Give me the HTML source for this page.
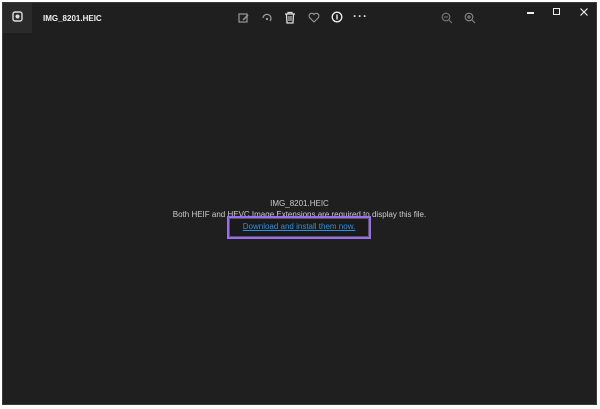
<!DOCTYPE html>
<html><head><style>
html,body{margin:0;padding:0;background:#fff;width:600px;height:409px;overflow:hidden;font-family:"Liberation Sans",sans-serif}
#win{position:absolute;left:2px;top:2px;width:595px;height:403px;background:#1f1f1f;border:1px solid #3a3a3a;box-sizing:border-box}
.ic{position:absolute;color:#bbb;font-size:11px}
svg{position:absolute}
</style></head><body>
<div id="win">
 <div style="position:absolute;left:0;top:0;width:29px;height:30px;background:#2a2a2a"></div>
 <svg style="left:9px;top:8px" width="11" height="11" viewBox="0 0 11 11"><rect x="1" y="1" width="9" height="9" rx="2" fill="none" stroke="#ddd" stroke-width="1.4"/><circle cx="5.5" cy="5.5" r="2" fill="#ddd"/></svg>
 <div style="position:absolute;left:40px;top:11px;color:#eee;font-size:8px;font-weight:bold">IMG_8201.HEIC</div>
 <svg style="left:235px;top:9px" width="12" height="12" viewBox="0 0 12 12"><rect x="1" y="2" width="8" height="8" fill="none" stroke="#999" stroke-width="1.2"/><path d="M5 8 L10 3" stroke="#999" stroke-width="1.5"/></svg>
 <svg style="left:258px;top:9px" width="12" height="12" viewBox="0 0 12 12"><path d="M2 6 A4 4 0 1 1 9 9" fill="none" stroke="#999" stroke-width="1.2"/><circle cx="6" cy="7" r="1.2" fill="#999"/></svg>
 <svg style="left:281px;top:8px" width="12" height="13" viewBox="0 0 12 13"><path d="M1 3H11M4 3V1.5H8V3M2.5 3.5L3 12H9L9.5 3.5" fill="none" stroke="#ddd" stroke-width="1.3"/><path d="M5 5V10M7 5V10" stroke="#ddd"/></svg>
 <svg style="left:305px;top:9px" width="12" height="11" viewBox="0 0 12 11"><path d="M6 10 L1.5 5.5 A2.6 2.6 0 0 1 6 2.5 A2.6 2.6 0 0 1 10.5 5.5 Z" fill="none" stroke="#999" stroke-width="1.1"/></svg>
 <svg style="left:328px;top:8px" width="12" height="12" viewBox="0 0 12 12"><circle cx="6" cy="6" r="4.8" fill="none" stroke="#eee" stroke-width="1.3"/><path d="M6 3.5V8.5" stroke="#eee" stroke-width="1.4"/></svg>
 <div class="ic" style="left:350px;top:6px;color:#ddd;font-size:12px;letter-spacing:1px;font-weight:bold">···</div>
 <svg style="left:438px;top:9px" width="12" height="12" viewBox="0 0 12 12"><circle cx="5" cy="5" r="3.8" fill="none" stroke="#777" stroke-width="1.1"/><path d="M3 5H7M8 8L11 11" stroke="#777" stroke-width="1.1"/></svg>
 <svg style="left:461px;top:9px" width="12" height="12" viewBox="0 0 12 12"><circle cx="5" cy="5" r="3.8" fill="none" stroke="#888" stroke-width="1.1"/><path d="M3 5H7M5 3V7M8 8L11 11" stroke="#888" stroke-width="1.1"/></svg>
 <div style="position:absolute;left:524px;top:9px;width:7px;height:2px;background:#eee"></div>
 <div style="position:absolute;left:550px;top:5px;width:5px;height:5px;border:1.5px solid #eee"></div>
 <svg style="left:577px;top:5px" width="8" height="8" viewBox="0 0 8 8"><path d="M0.5 0.5L7.5 7.5M7.5 0.5L0.5 7.5" stroke="#eee" stroke-width="1.2"/></svg>
 <div style="position:absolute;left:0;width:100%;top:196px;text-align:center;color:#ccc;font-size:8px">IMG_8201.HEIC</div>
 <div style="position:absolute;left:0;width:100%;top:207px;text-align:center;color:#ccc;font-size:8px">Both HEIF and HEVC Image Extensions are required to display this file.</div>
 <div style="position:absolute;left:224px;top:213px;width:144px;height:23px;box-sizing:border-box;border:2px solid #9a6cf5;background:#1a1a1a;box-shadow:inset 0 0 0 1px #555"></div>
 <div style="position:absolute;left:224px;width:144px;top:219px;text-align:center;color:#2f8fe0;font-size:8px;text-decoration:underline">Download and install them now.</div>
</div>
</body></html>
